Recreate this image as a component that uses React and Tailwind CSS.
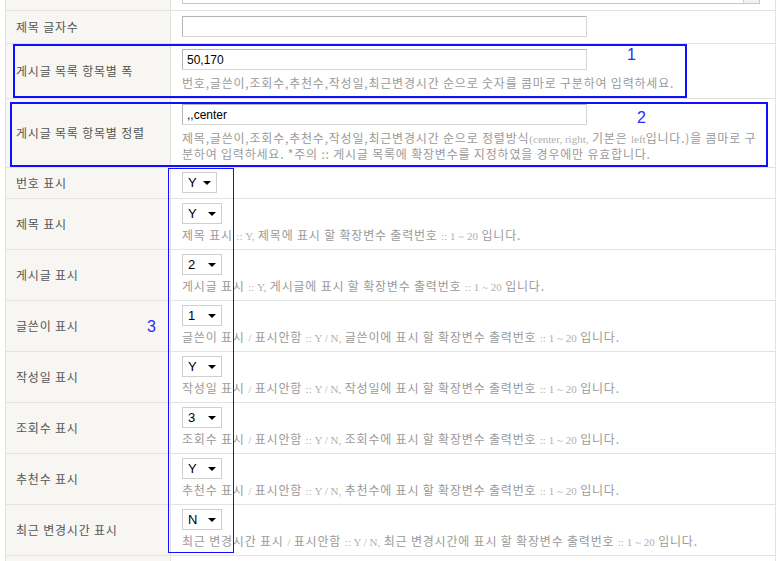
import React from 'react';

const S = ({ children }) => (
  <span className="font-['Liberation_Serif',serif] text-[11px] leading-[16px] tracking-normal text-[#b0b0b0]">{children}</span>
);

const TextBox = ({ value = '', w = 405 }) => (
  <div
    className="h-[21px] border border-[#b4b4b4] border-b-[#d6d6d6] border-r-[#d6d6d6] bg-white pl-[4px] flex items-center font-['Liberation_Sans',sans-serif] text-[12px] text-black"
    style={{ width: w }}
  >
    {value}
  </div>
);

const Select = ({ value, w = 40 }) => (
  <div
    className="h-[21px] border border-[#cfcfcf] bg-white flex items-center justify-between pl-[5px] pr-[5px] font-['Liberation_Sans',sans-serif] text-[13px] text-black"
    style={{ width: w }}
  >
    <span>{value}</span>
    <span className="w-0 h-0 border-l-[4px] border-r-[4px] border-t-[4px] border-l-transparent border-r-transparent border-t-black"></span>
  </div>
);

const Help = ({ children }) => (
  <div className="h-[16px] text-[12px] leading-[16px] tracking-[0.8px] text-[#9a9a9a] whitespace-nowrap">{children}</div>
);

const Row = ({ label, children, className = '' }) => (
  <div className={`flex border-b border-[#e3e3e3] ${className}`}>
    <div className="w-[165px] shrink-0 bg-[#f7f6f3] border-r border-[#e3e3e3] flex items-center pl-[10px] text-[12px] tracking-[0.8px] text-[#555]">
      {label}
    </div>
    <div className="flex-1 pl-[11px]">{children}</div>
  </div>
);

const selectRows = [
  {
    label: '제목 표시',
    value: 'Y',
    help: (
      <>
        제목 표시 <S>:: Y,</S> 제목에 표시 할 확장변수 출력번호 <S>:: 1 ~ 20</S> 입니다.
      </>
    ),
  },
  {
    label: '게시글 표시',
    value: '2',
    help: (
      <>
        게시글 표시 <S>:: Y,</S> 게시글에 표시 할 확장변수 출력번호 <S>:: 1 ~ 20</S> 입니다.
      </>
    ),
  },
  { label: '글쓴이 표시', value: '1', name: '글쓴이' },
  { label: '작성일 표시', value: 'Y', name: '작성일' },
  { label: '조회수 표시', value: '3', name: '조회수' },
  { label: '추천수 표시', value: 'Y', name: '추천수' },
  { label: '최근 변경시간 표시', value: 'N', name: '최근 변경시간' },
];

export default function App() {
  return (
    <div className="relative w-[782px] h-[561px] overflow-hidden bg-white font-['Noto_Sans_CJK_KR',sans-serif]">
      <div className="ml-[5px] w-[771px] border-x border-[#e3e3e3]">
        {/* top row, cut off */}
        <div className="flex h-[11px] border-b border-[#e3e3e3] overflow-hidden">
          <div className="w-[165px] shrink-0 bg-[#f7f6f3] border-r border-[#e3e3e3]"></div>
          <div className="flex-1 pl-[11px]">
            <div className="mt-[-20px] h-[24px] w-[578px] border border-[#c8c8c8] flex justify-end">
              <div className="w-[16px] h-full border-l border-[#d0d0d0] bg-[#f2f2f2]"></div>
            </div>
          </div>
        </div>

        <Row label="제목 글자수">
          <div className="pt-[5px] pb-[6px]">
            <TextBox />
          </div>
        </Row>

        <Row label="게시글 목록 항목별 폭">
          <div className="pt-[5px] pb-[7px]">
            <TextBox value="50,170" />
            <div className="mt-[5px]">
              <Help>번호,글쓴이,조회수,추천수,작성일,최근변경시간 순으로 숫자를 콤마로 구분하여 입력하세요.</Help>
            </div>
          </div>
        </Row>

        <Row label="게시글 목록 항목별 정렬">
          <div className="pt-[5px] pb-[5px]">
            <TextBox value=",,center" />
            <div className="mt-[5px]">
              <Help>
                제목,글쓴이,조회수,추천수,작성일,최근변경시간 순으로 정렬방식<S>(center, right,</S> 기본은 <S>left</S>입니다.)을 콤마로 구
              </Help>
              <Help>분하여 입력하세요. *주의 :: 게시글 목록에 확장변수를 지정하였을 경우에만 유효합니다.</Help>
            </div>
          </div>
        </Row>

        <Row label="번호 표시">
          <div className="pt-[4px] pb-[5px]">
            <Select value="Y" w={35} />
          </div>
        </Row>

        {selectRows.map((r) => (
          <Row key={r.label} label={r.label}>
            <div className="pt-[4px] pb-[6px]">
              <Select value={r.value} />
              <div className="mt-[3px]">
                <Help>
                  {r.help || (
                    <>
                      {r.name} 표시 <S>/</S> 표시안함 <S>:: Y / N,</S> {r.name}에 표시 할 확장변수 출력번호 <S>:: 1 ~ 20</S> 입니다.
                    </>
                  )}
                </Help>
              </div>
            </div>
          </Row>
        ))}

        <Row label="">
          <div className="h-[30px]"></div>
        </Row>
      </div>

      {/* annotation overlays */}
      <div className="absolute left-[13px] top-[44px] w-[674px] h-[54px] border-2 border-[#1010ff]"></div>
      <div className="absolute left-[10px] top-[102px] w-[758px] h-[65px] border-2 border-[#1010ff]"></div>
      <div className="absolute left-[168px] top-[168px] w-[66px] h-[385px] border-[1.5px] border-[#1010ff]"></div>
      <span className="absolute left-[627px] top-[43px] text-[16px] text-[#2a2aff] font-['Liberation_Sans',sans-serif]">1</span>
      <span className="absolute left-[637px] top-[106px] text-[16px] text-[#2a2aff] font-['Liberation_Sans',sans-serif]">2</span>
      <span className="absolute left-[147px] top-[315px] text-[16px] text-[#2a2aff] font-['Liberation_Sans',sans-serif]">3</span>
    </div>
  );
}
